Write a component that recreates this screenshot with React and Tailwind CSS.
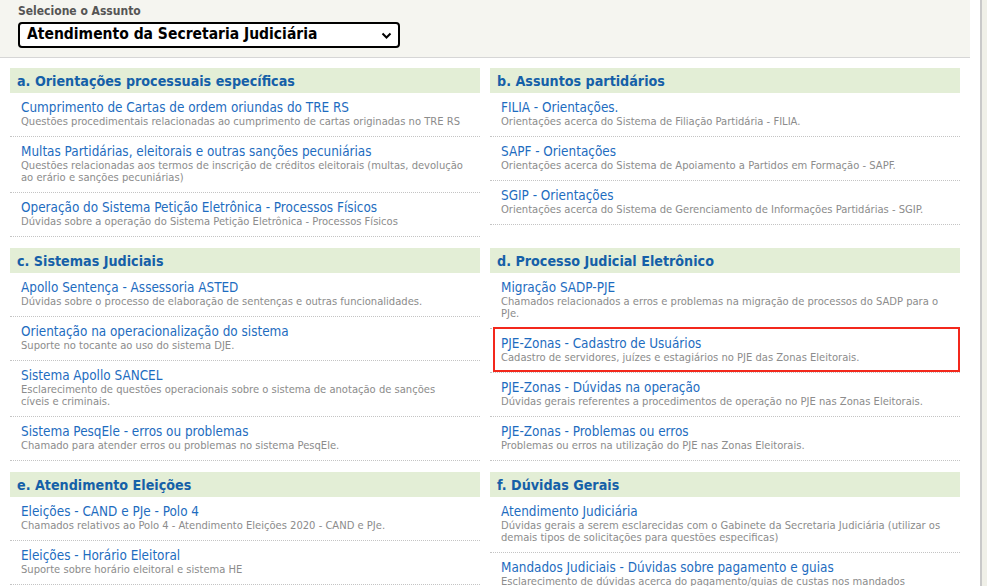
import React from 'react';

const sections = [
  {
    title: 'a. Orientações processuais específicas',
    items: [
      ['Cumprimento de Cartas de ordem oriundas do TRE RS', 'Questões procedimentais relacionadas ao cumprimento de cartas originadas no TRE RS'],
      ['Multas Partidárias, eleitorais e outras sanções pecuniárias', 'Questões relacionadas aos termos de inscrição de créditos eleitorais (multas, devolução ao erário e sanções pecuniárias)'],
      ['Operação do Sistema Petição Eletrônica - Processos Físicos', 'Dúvidas sobre a operação do Sistema Petição Eletrônica - Processos Físicos'],
    ],
  },
  {
    title: 'b. Assuntos partidários',
    items: [
      ['FILIA - Orientações.', 'Orientações acerca do Sistema de Filiação Partidária - FILIA.'],
      ['SAPF - Orientações', 'Orientações acerca do Sistema de Apoiamento a Partidos em Formação - SAPF.'],
      ['SGIP - Orientações', 'Orientações acerca do Sistema de Gerenciamento de Informações Partidárias - SGIP.'],
    ],
  },
  {
    title: 'c. Sistemas Judiciais',
    items: [
      ['Apollo Sentença - Assessoria ASTED', 'Dúvidas sobre o processo de elaboração de sentenças e outras funcionalidades.'],
      ['Orientação na operacionalização do sistema', 'Suporte no tocante ao uso do sistema DJE.'],
      [
        'Sistema Apollo SANCEL',
        <>
          Esclarecimento de questões operacionais sobre o sistema de anotação de sanções
          <br />
          cíveis e criminais.
        </>,
      ],
      ['Sistema PesqEle - erros ou problemas', 'Chamado para atender erros ou problemas no sistema PesqEle.'],
    ],
  },
  {
    title: 'd. Processo Judicial Eletrônico',
    items: [
      ['Migração SADP-PJE', 'Chamados relacionados a erros e problemas na migração de processos do SADP para o PJe.'],
      ['PJE-Zonas - Cadastro de Usuários', 'Cadastro de servidores, juízes e estagiários no PJE das Zonas Eleitorais.', true],
      ['PJE-Zonas - Dúvidas na operação', 'Dúvidas gerais referentes a procedimentos de operação no PJE nas Zonas Eleitorais.'],
      ['PJE-Zonas - Problemas ou erros', 'Problemas ou erros na utilização do PJE nas Zonas Eleitorais.'],
    ],
  },
  {
    title: 'e. Atendimento Eleições',
    items: [
      ['Eleições - CAND e PJe - Polo 4', 'Chamados relativos ao Polo 4 - Atendimento Eleições 2020 - CAND e PJe.'],
      ['Eleições - Horário Eleitoral', 'Suporte sobre horário eleitoral e sistema HE'],
    ],
  },
  {
    title: 'f. Dúvidas Gerais',
    items: [
      ['Atendimento Judiciária', 'Dúvidas gerais a serem esclarecidas com o Gabinete da Secretaria Judiciária (utilizar os demais tipos de solicitações para questões especificas)'],
      ['Mandados Judiciais - Dúvidas sobre pagamento e guias', 'Esclarecimento de dúvidas acerca do pagamento/guias de custas nos mandados'],
    ],
  },
];

const Section = ({ title, items }) => (
  <div>
    <div className="h-[25px] bg-[#e3eed6] pl-[7px] text-[14.2px] font-bold leading-[26px] text-[#1560a8]">
      {title}
    </div>
    {items.map(([name, desc, marked]) => (
      <div key={name} className="relative border-b border-dotted border-[#c4c4c4] pl-[11px] pr-[14px] pt-[7px] pb-[8px]">
        <div className="text-[13.4px] leading-[16px] text-[#1d6cc0]">{name}</div>
        <div className="text-[11.1px] leading-[12px] text-[#8c8c8c]">{desc}</div>
        {marked && (
          <span className="absolute left-[3px] right-0 top-[-2px] h-[45px] border-2 border-[#f3281c]" />
        )}
      </div>
    ))}
  </div>
);

export default function App() {
  return (
    <div
      className="flex h-[586px] w-[987px] overflow-hidden bg-white font-stretch-condensed"
      style={{ fontFamily: '"DejaVu Sans Condensed", "DejaVu Sans", Verdana, sans-serif' }}
    >
      <div className="w-[980px] shrink-0">
        <div className="h-[58px] w-[970px] border-b border-[#d6d6d6] bg-[#f5f5f0] pl-[18px] pt-[4px]">
          <div className="text-[12px] font-bold leading-[14px] text-[#555]">Selecione o Assunto</div>
          <div className="mt-[4px] flex h-[26px] w-[382px] items-center justify-between rounded-[4px] border-2 border-black bg-white pl-[7px] pr-[6px]">
            <span className="text-[15.5px] font-bold text-black">Atendimento da Secretaria Judiciária</span>
            <svg width="11" height="7" viewBox="0 0 11 7" fill="none">
              <path d="M1.5 1.5 L5.5 5.5 L9.5 1.5" stroke="#000" strokeWidth="2" />
            </svg>
          </div>
        </div>
        <div className="mt-[10px] grid w-[970px] grid-cols-2 gap-x-[10px] gap-y-[11px] px-[10px]">
          {sections.map((s) => (
            <Section key={s.title} {...s} />
          ))}
        </div>
      </div>
      <div className="flex-1 border-l-2 border-[#c9c9c9] bg-[#f0f0e8]" />
    </div>
  );
}
